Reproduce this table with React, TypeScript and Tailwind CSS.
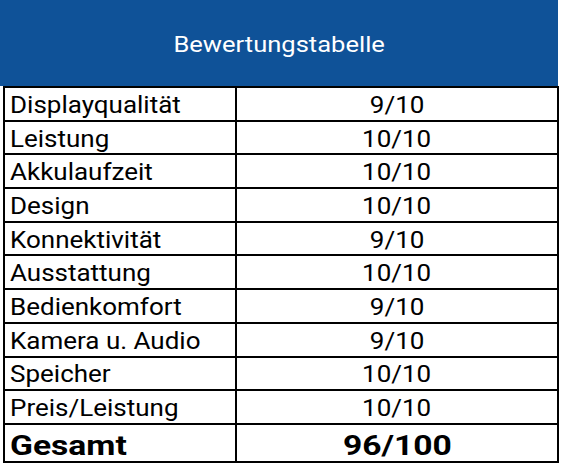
import React from "react";

const rows: [string, string][] = [
  ["Displayqualität", "9/10"],
  ["Leistung", "10/10"],
  ["Akkulaufzeit", "10/10"],
  ["Design", "10/10"],
  ["Konnektivität", "9/10"],
  ["Ausstattung", "10/10"],
  ["Bedienkomfort", "9/10"],
  ["Kamera u. Audio", "9/10"],
  ["Speicher", "10/10"],
  ["Preis/Leistung", "10/10"],
];

export default function App() {
  return (
    <div
      className="w-[564px] h-[467px] bg-white overflow-hidden"
      style={{ fontFamily: "Roboto, 'Liberation Sans', sans-serif" }}
    >
      <div className="w-[558px] h-[86px] bg-[#0f5298] flex items-center justify-center text-white text-[22px] pt-[2px]">
        <span className="inline-block scale-x-[1.16]">Bewertungstabelle</span>
      </div>
      <div className="ml-[3px] w-[556px] border-2 border-t-2 border-black text-black">
        {rows.map(([k, v]) => (
          <div key={k} className="flex h-[33.7px] border-b-2 border-black">
            <div className="w-[232px] border-r-2 border-black flex items-center pl-[5px] pt-[3px] text-[23px] leading-none">
              <span className="inline-block origin-left scale-x-[1.13]">{k}</span>
            </div>
            <div className="flex-1 flex items-center justify-center pt-[3px] text-[23px] leading-none">
              <span className="inline-block scale-x-[1.13]">{v}</span>
            </div>
          </div>
        ))}
        <div className="flex h-[36px]">
          <div className="w-[232px] border-r-2 border-black flex items-center pl-[5px] pt-[6px] text-[28px] font-bold leading-none">
            <span className="inline-block origin-left scale-x-[1.2]">Gesamt</span>
          </div>
          <div className="flex-1 flex items-center justify-center pt-[6px] text-[28px] font-bold leading-none">
            <span className="inline-block scale-x-[1.2]">96/100</span>
          </div>
        </div>
      </div>
    </div>
  );
}
